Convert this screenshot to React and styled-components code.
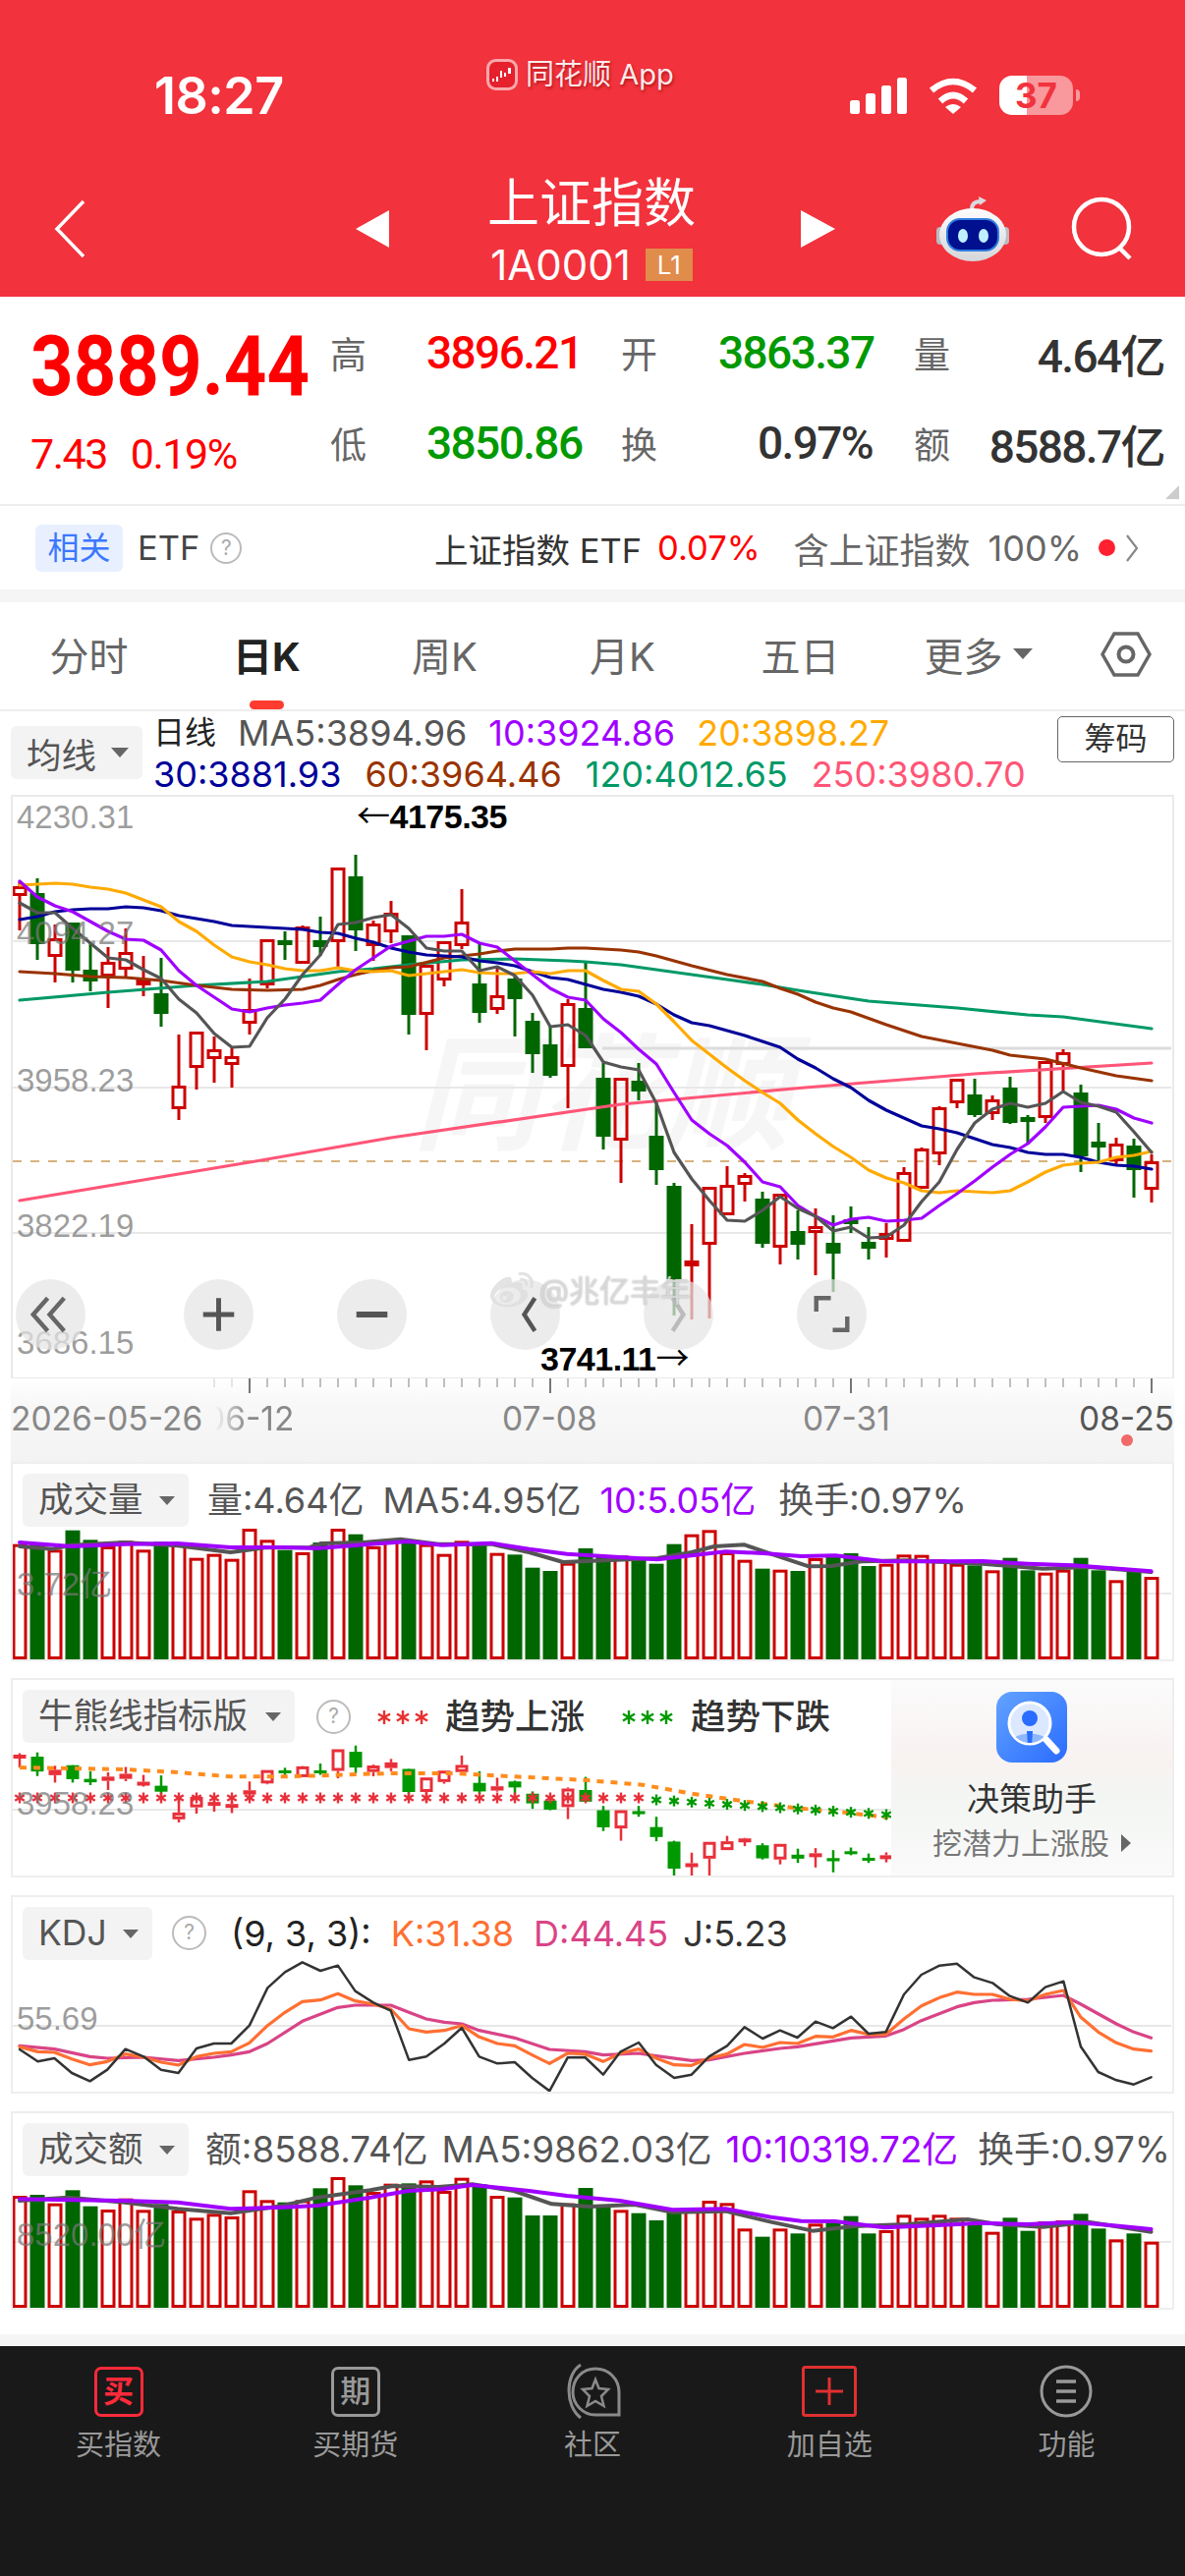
import React from "react";
import styled, { createGlobalStyle } from "styled-components";
import { FaWeibo } from "react-icons/fa";

const SANS = `Inter, "Noto Sans CJK SC", sans-serif`;
const NUM = `Roboto, "Noto Sans CJK SC", sans-serif`;
const LABEL = `"Liberation Sans", "Noto Sans CJK SC", sans-serif`;
const RED = "#ff0000";
const GREEN = "#009900";
const CANDLE_RED = "#cc0000";
const CANDLE_GREEN = "#006600";

// colour, high, body top, body bottom, low (page y, bar pitch 18px)
const CANDLES = [
  ["r", 897, 902, 912, 947], ["g", 894, 909, 961, 977], ["r", 941, 955, 974, 1000], ["g", 939, 939, 988, 1000],
  ["g", 960, 987, 999, 1009], ["r", 964, 979, 994, 1026], ["r", 945, 969, 987, 995], ["r", 973, 997, 1003, 1014],
  ["g", 975, 1011, 1032, 1045], ["r", 1053, 1105, 1129, 1140], ["r", 1050, 1050, 1087, 1109], ["r", 1055, 1068, 1078, 1102],
  ["r", 1065, 1075, 1084, 1107], ["r", 996, 1027, 1042, 1053], ["r", 956, 956, 1003, 1006], ["g", 948, 957, 962, 977],
  ["r", 942, 943, 981, 981], ["g", 933, 957, 964, 973], ["r", 883, 883, 959, 985], ["g", 870, 892, 947, 968],
  ["r", 937, 940, 963, 978], ["r", 917, 929, 949, 960], ["g", 952, 952, 1033, 1053], ["r", 982, 982, 1033, 1069],
  ["r", 958, 958, 998, 1004], ["r", 905, 938, 963, 966], ["g", 960, 1001, 1031, 1041], ["r", 983, 1013, 1028, 1032],
  ["g", 993, 996, 1017, 1055], ["g", 1031, 1039, 1073, 1092], ["g", 1045, 1063, 1095, 1097], ["r", 1017, 1021, 1086, 1128],
  ["g", 980, 1026, 1067, 1067], ["g", 1082, 1097, 1157, 1170], ["r", 1097, 1097, 1161, 1204], ["g", 1082, 1100, 1111, 1120],
  ["g", 1120, 1156, 1191, 1206], ["g", 1204, 1207, 1302, 1339], ["r", 1246, 1283, 1289, 1343], ["r", 1208, 1208, 1267, 1342],
  ["r", 1187, 1206, 1237, 1237], ["r", 1194, 1196, 1206, 1223], ["g", 1213, 1220, 1266, 1270], ["r", 1215, 1215, 1270, 1287],
  ["g", 1232, 1253, 1267, 1282], ["r", 1230, 1248, 1255, 1298], ["g", 1237, 1265, 1276, 1315], ["g", 1228, 1241, 1246, 1255],
  ["g", 1249, 1264, 1271, 1282], ["r", 1245, 1255, 1262, 1280], ["r", 1188, 1193, 1264, 1264], ["r", 1168, 1169, 1210, 1210],
  ["r", 1126, 1127, 1175, 1186], ["r", 1098, 1098, 1123, 1128], ["g", 1098, 1114, 1135, 1137], ["r", 1115, 1119, 1134, 1140],
  ["g", 1096, 1107, 1143, 1144], ["g", 1135, 1137, 1142, 1165], ["r", 1080, 1080, 1138, 1143], ["r", 1068, 1071, 1084, 1110],
  ["g", 1104, 1112, 1177, 1193], ["g", 1143, 1162, 1168, 1183], ["r", 1158, 1164, 1182, 1187], ["g", 1159, 1166, 1191, 1219],
  ["r", 1175, 1182, 1211, 1224],
];

const MA5 = [919,929,929,945,960,975,977,987,996,1017,1031,1052,1066,1065,1036,1017,992,972,941,939,934,931,945,965,968,968,988,984,993,1013,1045,1043,1054,1081,1086,1089,1123,1173,1200,1222,1242,1243,1232,1218,1230,1238,1253,1249,1260,1259,1247,1223,1203,1170,1143,1129,1123,1127,1123,1111,1122,1126,1132,1152,1173];
const MA10 = [897,913,922,928,938,948,956,957,967,988,1003,1015,1027,1030,1026,1023,1021,1018,1002,987,975,963,958,953,953,951,960,964,978,992,1006,1015,1018,1037,1051,1068,1083,1112,1140,1154,1166,1183,1203,1208,1227,1238,1247,1241,1239,1243,1242,1240,1227,1215,1202,1188,1175,1164,1147,1127,1126,1125,1129,1138,1143];
const MA20 = [901,900,899,900,903,905,909,916,923,938,948,962,974,979,982,986,988,988,985,988,989,988,993,991,989,987,990,991,991,989,991,988,988,998,1007,1009,1022,1040,1059,1073,1087,1100,1112,1123,1140,1154,1167,1178,1191,1199,1204,1212,1214,1212,1213,1214,1212,1203,1193,1186,1184,1183,1178,1176,1172];
const MA30 = [936,933,928,926,925,925,923,924,927,932,935,938,942,943,944,945,946,949,950,955,959,965,969,972,973,974,978,980,983,989,995,997,1002,1007,1010,1014,1022,1033,1041,1044,1049,1054,1060,1066,1078,1087,1098,1107,1120,1130,1138,1146,1149,1153,1159,1165,1168,1173,1175,1175,1178,1183,1186,1187,1190];
const MA60 = [[0,989],[2,991],[4,994],[6,995],[8,998],[10,1003],[12,1007],[14,1008],[16,1007],[17,1003],[18,997],[19,992],[20,988],[21,985],[22,984],[24,975],[26,971],[27,968],[28,966],[30,966],[31,965],[32,965],[34,967],[35,969],[36,973],[38,983],[40,992],[42,999],[43,1006],[44,1012],[45,1020],[46,1026],[47,1030],[49,1043],[51,1055],[53,1062],[55,1069],[56,1074],[58,1078],[60,1087],[62,1095],[64,1100]];
const MA120 = [[0,1018],[5,1010],[10,1003],[14,999],[16,994],[18,989],[20,986],[22,982],[25,977],[28,976],[31,978],[32,979],[34,982],[36,987],[38,992],[40,997],[42,1002],[44,1008],[48,1019],[53,1026],[57,1033],[59,1035],[64,1047]];
const MA250 = [[0,1222],[13,1183],[21,1158],[34,1124],[44.4,1107],[54,1093],[64,1082]];

const VOL_TOPS = [215,210,232,173,202,222,205,232,208,212,257,245,260,168,202,233,240,210,168,185,222,205,205,215,245,205,215,242,247,287,297,272,228,250,250,255,275,215,185,172,240,263,290,293,297,258,250,243,282,275,247,248,262,275,280,295,257,295,302,293,257,295,325,300,315];
const VOL_PURPLE = [[26,210],[95,222],[165,215],[235,213],[305,225],[375,225],[420,228],[490,215],[540,207],[585,218],[650,212],[700,230],[750,245],[820,255],[870,262],[915,250],[960,238],[1010,243],[1060,252],[1105,250],[1170,268],[1240,268],[1300,267],[1360,275],[1420,280],[1480,290],[1523,298]];
const VOL_GRAY = [[26,222],[70,230],[95,218],[165,210],[235,220],[305,240],[350,226],[410,225],[425,213],[480,210],[530,200],[580,215],[650,215],[700,240],[745,270],[800,265],[870,258],[915,240],[945,222],[985,217],[1020,245],[1070,283],[1100,282],[1140,268],[1200,265],[1300,275],[1380,290],[1440,285],[1523,300]];
const AMT_TOPS = [945,942,968,928,977,987,953,988,970,990,1012,1000,1008,928,958,965,958,922,888,913,933,908,907,898,930,890,910,945,950,1005,1005,968,921,980,988,998,1020,990,982,960,967,1045,1070,1045,1060,1030,1025,1007,1060,1050,1003,1012,1003,1012,1035,1055,1012,1052,1023,1020,1000,1045,1078,1060,1085];
const AMT_PURPLE = [[26,955],[95,958],[165,960],[235,965],[305,985],[375,980],[420,975],[490,950],[540,930],[585,925],[625,912],[700,930],[750,945],[820,960],[890,988],[960,985],[1020,1010],[1060,1022],[1105,1023],[1170,1042],[1240,1035],[1300,1028],[1360,1032],[1420,1025],[1480,1037],[1523,1047]];
const AMT_GRAY = [[26,960],[90,950],[165,965],[235,985],[305,998],[375,975],[420,950],[490,928],[520,915],[580,918],[625,910],[680,930],[730,970],[780,978],[840,972],[890,995],[960,992],[1020,1025],[1075,1052],[1130,1038],[1200,1032],[1280,1017],[1320,1032],[1380,1040],[1440,1025],[1523,1055]];
const KDJ_J = [[26,498],[50,535],[72,525],[95,570],[119,595],[142,560],[166,497],[190,520],[213,560],[236,570],[260,495],[283,480],[306,480],[330,425],[354,310],[377,262],[400,232],[424,258],[447,242],[470,320],[494,355],[517,380],[541,530],[564,520],[588,480],[611,432],[634,520],[658,541],[681,537],[704,585],[727,625],[751,523],[774,522],[798,575],[821,505],[845,477],[868,545],[892,585],[915,575],[938,520],[962,487],[985,430],[1009,465],[1032,440],[1055,462],[1079,413],[1102,433],[1126,398],[1149,450],[1172,445],[1196,330],[1219,270],[1243,242],[1266,236],[1289,278],[1313,295],[1336,335],[1360,355],[1383,308],[1407,290],[1430,490],[1453,567],[1477,592],[1500,605],[1523,583]];
const KDJ_K = [[26,490],[50,505],[72,507],[95,527],[119,545],[142,535],[166,512],[190,522],[213,537],[236,546],[260,520],[283,510],[306,505],[330,478],[354,425],[377,385],[400,352],[424,347],[447,328],[470,350],[494,360],[517,375],[541,435],[564,445],[588,440],[611,425],[634,460],[658,480],[681,487],[704,515],[727,541],[751,510],[774,512],[798,535],[821,510],[845,497],[868,525],[892,545],[915,547],[938,525],[962,512],[985,483],[1009,492],[1032,477],[1055,480],[1079,458],[1102,460],[1126,440],[1149,452],[1172,452],[1196,405],[1219,365],[1243,340],[1266,323],[1289,330],[1313,330],[1336,345],[1360,350],[1383,330],[1407,318],[1430,400],[1453,445],[1477,478],[1500,497],[1523,503]];
const KDJ_D = [[26,487],[72,497],[119,520],[142,525],[190,522],[236,532],[283,522],[306,515],[330,505],[354,480],[400,412],[447,370],[470,363],[517,363],[541,385],[564,405],[588,415],[611,420],[634,440],[681,463],[727,498],[774,505],[798,515],[845,510],[868,518],[915,532],[938,530],[985,510],[1032,495],[1055,490],[1126,463],[1172,457],[1196,437],[1219,410],[1266,368],[1289,355],[1313,348],[1360,345],[1407,333],[1430,360],[1477,420],[1500,445],[1523,463]];
const TREND = [[26,897],[95,900],[165,903],[235,912],[305,925],[375,925],[420,922],[515,915],[600,915],[680,925],[770,935],[850,950],[910,975],[985,1000],[1050,1020],[1120,1035],[1175,1050]];

const barX = (i) => 20 + 18 * i;
const seriesPoints = (ys) => ys.map((y, i) => `${barX(i)},${y}`).join(" ");
const sparsePoints = (pairs) => pairs.map(([i, y]) => `${barX(i)},${y}`).join(" ");
// traced from the 1.3x / 3x crops of the panels
const tracedPoints = (pairs, base) => pairs.map(([u, v]) => `${u / 1.3},${base + v / 3}`).join(" ");

const GlobalStyle = createGlobalStyle`
  html, body { margin: 0; padding: 0; background: #fff; }
  body { font-family: ${SANS}; }
  * { box-sizing: border-box; }
`;

const Page = styled.div`
  width: 1206px;
  height: 2622px;
  overflow: hidden;
  background: #fff;
  display: flex;
  flex-direction: column;
`;

const Header = styled.header`
  flex: none;
  height: 302px;
  background: #f2323c;
  color: #fff;
`;
const StatusBar = styled.div`
  height: 170px;
  display: grid;
  grid-template-columns: 495px 188px 1fr;
  align-items: start;
`;
const Clock = styled.div`
  margin: 70px 0 0 157px;
  font-size: 52px;
  line-height: 56px;
  font-weight: 600;
  letter-spacing: -0.5px;
`;
const AppTag = styled.div`
  margin-top: 58px;
  height: 36px;
  display: flex;
  align-items: center;
  gap: 8px;
  font-size: 29px;
  line-height: 36px;
  white-space: nowrap;
  color: rgba(255, 255, 255, 0.92);
  text-shadow: 1px 2px 3px rgba(120, 0, 0, 0.55);
  svg {
    flex: none;
  }
`;
const StatusIcons = styled.div`
  margin: 77px 0 0 182px;
  height: 40px;
  display: flex;
  align-items: center;
  gap: 22px;
`;
const Battery = styled.div`
  position: relative;
  width: 75px;
  height: 40px;
  border-radius: 13px;
  overflow: hidden;
  background: linear-gradient(to right, #fff 37%, rgba(255, 255, 255, 0.5) 37%);
  color: #f2323c;
  font-size: 35px;
  font-weight: 700;
  line-height: 40px;
  text-align: center;
`;
const BatteryTip = styled.div`
  width: 4px;
  height: 12px;
  margin-left: -19px;
  border-radius: 0 4px 4px 0;
  background: rgba(255, 255, 255, 0.5);
`;
const NavRow = styled.div`
  height: 132px;
  padding-bottom: 6px;
  display: grid;
  grid-template-columns: 362px 34px 412px 42px 1fr;
  align-items: center;
`;
const BackIcon = styled.svg`
  margin-left: 55px;
  display: block;
`;
const Arrow = styled.div`
  width: 0;
  height: 0;
  border-top: 19px solid transparent;
  border-bottom: 19px solid transparent;
  ${({ $dir }) => ($dir === "left" ? "border-right: 34px solid #fff;" : "border-left: 35px solid #fff; margin-left: 7px;")}
`;
const TitleBlock = styled.div`
  margin-top: 2px;
  display: flex;
  flex-direction: column;
  align-items: center;
`;
const Title = styled.div`
  font-size: 53px;
  line-height: 60px;
`;
const SubTitle = styled.div`
  margin-top: 11px;
  display: flex;
  align-items: center;
  gap: 15px;
  font-size: 42px;
  line-height: 44px;
`;
const LevelBadge = styled.span`
  width: 48px;
  height: 33px;
  background: #e08c4b;
  font-size: 26px;
  line-height: 33px;
  text-align: center;
`;
const NavTools = styled.div`
  margin-left: 103px;
  display: flex;
  align-items: center;
  gap: 63px;
`;

const QuoteSection = styled.section`
  position: relative;
  flex: none;
  height: 213px;
  border-bottom: 2px solid #eee;
  display: flex;
`;
const QuoteLeft = styled.div`
  width: 336px;
  padding: 21px 0 0 31px;
`;
const BigPrice = styled.div`
  font-family: ${NUM};
  font-size: 86px;
  line-height: 100px;
  font-weight: 700;
  color: ${RED};
  transform: scaleX(0.885);
  transform-origin: left center;
  white-space: nowrap;
`;
const ChangeRow = styled.div`
  margin-top: 14px;
  display: flex;
  gap: 24px;
  font-family: ${NUM};
  font-size: 43px;
  line-height: 50px;
  letter-spacing: -1.5px;
  color: ${RED};
`;
const QuoteGrid = styled.div`
  margin-top: 11px;
  display: grid;
  grid-template-columns: 98px 198px 99px 199px 42px 213px;
  grid-auto-rows: 92px;
  align-items: center;
`;
const QuoteLabel = styled.div`
  font-size: 37px;
  color: #666;
  white-space: nowrap;
`;
const QuoteValue = styled.div`
  padding-right: ${({ $pad }) => $pad || 0}px;
  font-family: ${NUM};
  font-size: 46px;
  font-weight: 500;
  letter-spacing: -1.6px;
  white-space: nowrap;
  color: ${({ $color }) => $color};
  text-align: ${({ $right }) => ($right ? "right" : "left")};
`;
const CornerMark = styled.div`
  position: absolute;
  right: 6px;
  bottom: 5px;
  width: 0;
  height: 0;
  border-left: 14px solid transparent;
  border-bottom: 14px solid #ccc;
`;

const EtfRow = styled.section`
  flex: none;
  height: 85px;
  padding: 0 48px 0 36px;
  display: flex;
  align-items: center;
  font-size: 34.5px;
`;
const RelatedChip = styled.span`
  width: 89px;
  height: 48px;
  border-radius: 6px;
  background: #e8f0ff;
  color: #3b78ff;
  font-size: 32px;
  line-height: 48px;
  text-align: center;
`;
const EtfName = styled.span`
  margin-left: 15px;
  color: #444;
`;
const HelpMark = styled.span`
  flex: none;
  width: ${({ $size }) => $size || 32}px;
  height: ${({ $size }) => $size || 32}px;
  margin-left: ${({ $left }) => $left || 0}px;
  border: 2.5px solid #bbb;
  border-radius: 50%;
  color: #aaa;
  font-size: 21px;
  line-height: ${({ $size }) => ($size || 32) - 5}px;
  text-align: center;
`;
const EtfRight = styled.div`
  margin-left: auto;
  display: flex;
  align-items: center;
`;
const EtfText = styled.span`
  margin-left: ${({ $left }) => $left || 0}px;
  font-size: ${({ $size }) => $size || 34.5}px;
  color: ${({ $color }) => $color};
  white-space: nowrap;
`;
const LiveDot = styled.span`
  width: 17px;
  height: 17px;
  margin: 0 11px 0 17px;
  border-radius: 50%;
  background: #ff2030;
`;

const GrayGap = styled.div`
  flex: none;
  height: ${({ $h }) => $h}px;
  background: #f5f5f5;
`;

const Tabs = styled.nav`
  flex: none;
  height: 111px;
  border-bottom: 2px solid #eee;
  display: grid;
  grid-template-columns: repeat(6, 181px) 120px;
  align-items: center;
`;
const Tab = styled.div`
  position: relative;
  height: 100%;
  display: flex;
  align-items: center;
  justify-content: center;
  gap: 10px;
  padding-bottom: 4px;
  font-size: 40px;
  color: ${({ $active }) => ($active ? "#222" : "#666")};
  font-weight: ${({ $active }) => ($active ? 700 : 400)};
  &::after {
    content: "";
    display: ${({ $active }) => ($active ? "block" : "none")};
    position: absolute;
    left: 73px;
    bottom: 0;
    width: 35px;
    height: 9px;
    border-radius: 5px;
    background: #ff3b30;
  }
`;
const Caret = styled.span`
  flex: none;
  width: 0;
  height: 0;
  border-left: ${({ $size }) => $size}px solid transparent;
  border-right: ${({ $size }) => $size}px solid transparent;
  border-top: ${({ $size }) => Math.round($size * 1.1)}px solid ${({ $color }) => $color || "#666"};
`;

const IndicatorBar = styled.div`
  flex: none;
  height: 85px;
  padding: 0 11px;
  display: flex;
`;
const SelectChip = styled.div`
  flex: none;
  height: 54px;
  margin-top: ${({ $top }) => $top}px;
  padding: 0 14px 0 ${({ $pad }) => $pad || 16}px;
  border-radius: 6px;
  background: #f3f3f3;
  display: flex;
  align-items: center;
  justify-content: space-between;
  gap: 12px;
  width: ${({ $w }) => $w}px;
  font-size: 35.5px;
  color: #555;
  white-space: nowrap;
`;
const MaRows = styled.div`
  margin-left: 11px;
  padding-top: 1px;
  flex: 1;
`;
const MaRow = styled.div`
  height: 42px;
  display: flex;
  gap: ${({ $gap }) => $gap}px;
  padding-left: ${({ $indent }) => $indent || 0}px;
  font-size: 36px;
  line-height: 42px;
  white-space: nowrap;
`;
const MaValue = styled.span`
  font-size: ${({ $size }) => $size || 36}px;
  color: ${({ $color }) => $color};
`;
const ChipsButton = styled.div`
  flex: none;
  width: 119px;
  height: 47px;
  margin-top: 5px;
  border: 1.5px solid #666;
  border-radius: 5px;
  font-size: 32px;
  line-height: 44px;
  color: #333;
  text-align: center;
`;

const ChartBox = styled.div`
  position: relative;
  flex: none;
  height: 594px;
  margin: 0 11px;
  border: 2px solid #eaeaea;
  border-bottom-width: 1px;
`;
const ChartSvg = styled.svg`
  display: block;
`;
const ScaleLabel = styled.div`
  position: absolute;
  left: 4px;
  top: ${({ $y }) => $y}px;
  font-family: ${LABEL};
  font-size: ${({ $size }) => $size || 33}px;
  line-height: 36px;
  color: rgba(120, 120, 120, 0.72);
  white-space: nowrap;
`;
const ExtremeLabel = styled.div`
  position: absolute;
  left: ${({ $x }) => $x}px;
  top: ${({ $y }) => $y}px;
  font-family: ${LABEL};
  font-size: 34px;
  font-weight: 700;
  line-height: 36px;
  letter-spacing: -0.5px;
  color: #000;
  white-space: nowrap;
`;
const ExtremeArrow = styled.span`
  font-family: "Noto Sans CJK SC", sans-serif;
  font-weight: 400;
`;
const ChartControls = styled.div`
  position: absolute;
  left: 3px;
  top: 491px;
  display: flex;
  gap: 85px;
`;
const ControlButton = styled.div`
  width: 71px;
  height: 72px;
  margin-right: ${({ $extra }) => $extra || 0}px;
  border-radius: 50%;
  background: rgba(228, 228, 228, 0.72);
  display: flex;
  align-items: center;
  justify-content: center;
`;
const Watermark = styled.div`
  position: absolute;
  left: 486px;
  top: 478px;
  display: flex;
  align-items: center;
  gap: 6px;
  color: rgba(222, 222, 222, 0.85);
  font-size: 31px;
  line-height: 50px;
  text-shadow: 0 0 2px rgba(120, 120, 120, 0.6);
  white-space: nowrap;
`;

const TimeAxis = styled.div`
  position: relative;
  flex: none;
  height: 85px;
  margin: 0 11px;
  background: linear-gradient(#fff 0, #f8f8f8 30%, #f3f3f3 100%);
`;
const AxisDate = styled.div`
  position: absolute;
  left: ${({ $x }) => $x}px;
  top: 23px;
  font-size: 33.5px;
  line-height: 36px;
  color: ${({ $dark }) => ($dark ? "#555" : "#888")};
  white-space: nowrap;
  ${({ $fade }) => $fade && "-webkit-mask-image: linear-gradient(to right, transparent 12%, #000 48%); mask-image: linear-gradient(to right, transparent 12%, #000 48%);"}
`;
const AxisDot = styled.div`
  position: absolute;
  left: 1130px;
  top: 57px;
  width: 12px;
  height: 12px;
  border-radius: 50%;
  background: #f06a6a;
`;

const Panel = styled.section`
  position: relative;
  flex: none;
  height: ${({ $h }) => $h}px;
  margin: ${({ $gap }) => $gap || 0}px 11px 0;
  border: 2px solid #eee;
  overflow: hidden;
  display: ${({ $row }) => ($row ? "flex" : "block")};
`;
const PanelMain = styled.div`
  position: relative;
  width: 894px;
`;
const PanelHead = styled.div`
  height: ${({ $h }) => $h || 63}px;
  padding: 10px 0 0 10px;
  display: flex;
  gap: ${({ $gap }) => $gap || 18}px;
  font-size: ${({ $size }) => $size || 36}px;
  line-height: 54px;
  white-space: nowrap;
`;
const HeadValue = styled.span`
  margin-left: ${({ $left }) => $left || 0}px;
  color: ${({ $color }) => $color || "#555"};
`;
const HeadCluster = styled.div`
  display: flex;
  align-items: center;
`;
const LegendSpace = styled.span`
  width: ${({ $w }) => $w}px;
`;
const LegendText = styled.span`
  margin-left: ${({ $left }) => $left || 0}px;
  font-size: 35.5px;
  font-weight: 500;
  color: #333;
`;
const Aside = styled.aside`
  flex: 1;
  background: linear-gradient(#fbfbfb 0, #f8f2f1 40%, #f3f6f3 62%, #fafafa 100%);
  display: flex;
  flex-direction: column;
  align-items: center;
  padding-top: 12px;
`;
const AsideTitle = styled.div`
  margin-top: 15px;
  font-size: 33px;
  line-height: 44px;
  color: #333;
`;
const AsideSub = styled.div`
  margin-top: 2px;
  display: flex;
  align-items: center;
  gap: 12px;
  font-size: 30px;
  line-height: 42px;
  color: #777;
`;
const SideCaret = styled.span`
  width: 0;
  height: 0;
  border-top: 9px solid transparent;
  border-bottom: 9px solid transparent;
  border-left: 10px solid #666;
`;

const BottomNav = styled.nav`
  flex: 1;
  background: #191919;
  display: grid;
  grid-template-columns: repeat(5, 1fr);
  align-items: start;
  padding-top: 17px;
`;
const NavItem = styled.div`
  display: flex;
  flex-direction: column;
  align-items: center;
  font-size: 29px;
  line-height: 40px;
  color: #999;
`;
const NavIconBox = styled.div`
  height: 58px;
  margin-bottom: 6px;
  display: flex;
  align-items: center;
  justify-content: center;
`;
const LetterBox = styled.div`
  width: 50px;
  height: 51px;
  border: 3px solid ${({ $color }) => $color};
  border-radius: 7px;
  color: ${({ $color }) => $color};
  font-size: 31px;
  font-weight: ${({ $bold }) => ($bold ? 700 : 500)};
  line-height: 43px;
  text-align: center;
`;
const Spacer = styled.div`
  flex: none;
  height: ${({ $h }) => $h}px;
`;
const TickStrip = styled.svg`
  display: block;
`;

const Candle = ({ i, c, hi, top, bot, lo, red, green, width = 12, wick = 3 }) => {
  const x = barX(i);
  if (c === "g") {
    return (
      <g>
        <line x1={x} x2={x} y1={hi} y2={lo} stroke={green} strokeWidth={wick} />
        <rect x={x - width / 2 - 1.5} y={top} width={width + 3} height={Math.max(bot - top, 3)} fill={green} />
      </g>
    );
  }
  return (
    <g>
      {hi < top && <line x1={x} x2={x} y1={hi} y2={top} stroke={red} strokeWidth={wick} />}
      {lo > bot && <line x1={x} x2={x} y1={bot} y2={lo} stroke={red} strokeWidth={wick} />}
      <rect x={x - width / 2} y={top + 1.5} width={width} height={Math.max(bot - top - 3, 1)} fill="none" stroke={red} strokeWidth={3} />
    </g>
  );
};

const Line = ({ points, color, width = 3.2 }) => (
  <polyline points={points} fill="none" stroke={color} strokeWidth={width} strokeLinejoin="round" strokeLinecap="round" />
);

const GridLine = ({ y, from = 13, to = 1192 }) => <line x1={from} x2={to} y1={y} y2={y} stroke="#e8e8e8" strokeWidth="2" />;

const Asterisk = ({ x, y, color, r = 5.5 }) => (
  <g stroke={color} strokeWidth="2.4">
    <line x1={x} x2={x} y1={y - r} y2={y + r} />
    <line x1={x - r * 0.87} x2={x + r * 0.87} y1={y - r * 0.5} y2={y + r * 0.5} />
    <line x1={x - r * 0.87} x2={x + r * 0.87} y1={y + r * 0.5} y2={y - r * 0.5} />
  </g>
);

const VolumeBars = ({ tops, base, bottom }) =>
  tops.map((v, i) => {
    const y = base + v / 3;
    const x = barX(i);
    return CANDLES[i][0] === "g" ? (
      <rect key={i} x={x - 7.5} y={y} width={15} height={bottom - y} fill={CANDLE_GREEN} />
    ) : (
      <rect key={i} x={x - 6} y={y + 1.5} width={12} height={bottom - y - 3} fill="none" stroke={CANDLE_RED} strokeWidth={3} />
    );
  });

const Robot = () => (
  <svg width="74" height="68" viewBox="0 0 74 68">
    <defs>
      <linearGradient id="robotShell" x1="0" y1="0" x2="0" y2="1">
        <stop offset="0" stopColor="#fdfdfd" />
        <stop offset="1" stopColor="#d4d6da" />
      </linearGradient>
    </defs>
    <path d="M36 14 C36 8 40 6 45 6" fill="none" stroke="#d8dade" strokeWidth="4" />
    <path d="M43 1 L51 5 L44 10 Z" fill="#d8dade" />
    <rect x="0" y="32" width="8" height="18" rx="4" fill="#b9bcc2" />
    <rect x="66" y="32" width="8" height="18" rx="4" fill="#b9bcc2" />
    <ellipse cx="37" cy="40" rx="34" ry="27" fill="url(#robotShell)" />
    <rect x="11" y="24" width="52" height="32" rx="13" fill="#00108f" stroke="#2f7de0" strokeWidth="2" />
    <ellipse cx="27" cy="41" rx="5" ry="7" fill="#bfefff" />
    <ellipse cx="48" cy="41" rx="5" ry="7" fill="#bfefff" />
  </svg>
);

const WifiIcon = () => (
  <svg width="50" height="37" viewBox="0 0 50 37">
    <path d="M3 13 Q25 -5 47 13" fill="none" stroke="#fff" strokeWidth="6.5" />
    <path d="M12 24 Q25 12 38 24" fill="none" stroke="#fff" strokeWidth="6.5" />
    <path d="M17 30 Q25 24 33 30 L25 37 Z" fill="#fff" />
  </svg>
);

const SignalIcon = () => (
  <svg width="58" height="37" viewBox="0 0 58 37" fill="#fff">
    <rect x="0" y="23" width="10" height="14" rx="2.5" />
    <rect x="16" y="16" width="10" height="21" rx="2.5" />
    <rect x="32" y="8" width="10" height="29" rx="2.5" />
    <rect x="48" y="0" width="10" height="37" rx="2.5" />
  </svg>
);

const AppLogo = () => (
  <svg width="32" height="32" viewBox="0 0 32 32">
    <rect x="1.5" y="1.5" width="29" height="29" rx="8" fill="#e6202c" stroke="#f9a8ac" strokeWidth="3" />
    <path d="M6 20h2v3H6zM10 18h2v5h-2zM14 12h2v7h-2zM18 14h2v4h-2zM22 9h3v6h-3z" fill="#fff" />
  </svg>
);

const AdIcon = () => (
  <svg width="72" height="72" viewBox="0 0 72 72">
    <defs>
      <linearGradient id="adBg" x1="0" y1="0" x2="1" y2="1">
        <stop offset="0" stopColor="#63a3ff" />
        <stop offset="1" stopColor="#2a6cff" />
      </linearGradient>
      <clipPath id="adLens"><circle cx="34" cy="32" r="20" /></clipPath>
    </defs>
    <rect width="72" height="72" rx="16" fill="url(#adBg)" />
    <circle cx="34" cy="32" r="21" fill="#dbe8ff" stroke="#fff" strokeWidth="3" />
    <g clipPath="url(#adLens)">
      <path d="M12 56 C14 38 54 38 56 56 Z" fill="#8db8fb" />
      <path d="M31 40h6l-1 14h-4z" fill="#2a6cff" />
    </g>
    <circle cx="34" cy="27" r="8" fill="#2a6cff" />
    <path d="M51 49 L61 60" stroke="#fff" strokeWidth="7" strokeLinecap="round" />
  </svg>
);

const CONTROL_ICONS = {
  rewind: <path d="M33 19 L18 36 L33 53 M50 19 L35 36 L50 53" fill="none" stroke="#666" strokeWidth="4.5" />,
  plus: <path d="M36 19 V53 M20 36 H52" stroke="#555" strokeWidth="5" />,
  minus: <path d="M20 36 H52" stroke="#555" strokeWidth="6" />,
  prev: <path d="M46 19 L35 36 L46 53" fill="none" stroke="#555" strokeWidth="4.5" />,
  next: <path d="M30 19 L41 36 L30 53" fill="none" stroke="#bbb" strokeWidth="4.5" />,
  expand: <path d="M20 33 V19 H35 M37 52 H52 V38" fill="none" stroke="#666" strokeWidth="4.5" />,
};

const ControlIcon = ({ name }) => (
  <svg width="71" height="72" viewBox="0 0 72 72">
    {CONTROL_ICONS[name]}
  </svg>
);

const StarAsterisks = ({ color }) => (
  <svg width="52" height="20" viewBox="0 0 52 20">
    <Asterisk x={7} y={10} color={color} r={7} />
    <Asterisk x={26} y={10} color={color} r={7} />
    <Asterisk x={45} y={10} color={color} r={7} />
  </svg>
);

const App = () => {
  const scaleDown = (y) => 1786 + (y - 902) * 0.29;
  const asterisks = Array.from({ length: 50 }, (_, i) => i);

  return (
    <Page>
      <GlobalStyle />
      <Header>
        <StatusBar>
          <Clock>18:27</Clock>
          <AppTag>
            <AppLogo />
            同花顺 App
          </AppTag>
          <StatusIcons>
            <SignalIcon />
            <WifiIcon />
            <Battery>37</Battery>
            <BatteryTip />
          </StatusIcons>
        </StatusBar>
        <NavRow>
          <BackIcon width="32" height="60" viewBox="0 0 32 60">
            <path d="M30 2 L3 30 L30 58" fill="none" stroke="#fff" strokeWidth="3.5" />
          </BackIcon>
          <Arrow $dir="left" />
          <TitleBlock>
            <Title>上证指数</Title>
            <SubTitle>
              1A0001
              <LevelBadge>L1</LevelBadge>
            </SubTitle>
          </TitleBlock>
          <Arrow $dir="right" />
          <NavTools>
            <Robot />
            <svg width="65" height="66" viewBox="0 0 65 66">
              <circle cx="31" cy="31" r="28" fill="none" stroke="#fff" strokeWidth="4.5" />
              <path d="M49 52 L60 63" stroke="#fff" strokeWidth="4.5" />
            </svg>
          </NavTools>
        </NavRow>
      </Header>

      <QuoteSection>
        <QuoteLeft>
          <BigPrice>3889.44</BigPrice>
          <ChangeRow>
            <span>7.43</span>
            <span>0.19%</span>
          </ChangeRow>
        </QuoteLeft>
        <QuoteGrid>
          <QuoteLabel>高</QuoteLabel>
          <QuoteValue $color={RED}>3896.21</QuoteValue>
          <QuoteLabel>开</QuoteLabel>
          <QuoteValue $color={GREEN} $right $pad={42}>3863.37</QuoteValue>
          <QuoteLabel>量</QuoteLabel>
          <QuoteValue $color="#333" $right>4.64亿</QuoteValue>
          <QuoteLabel>低</QuoteLabel>
          <QuoteValue $color={GREEN}>3850.86</QuoteValue>
          <QuoteLabel>换</QuoteLabel>
          <QuoteValue $color="#333" $right $pad={42}>0.97%</QuoteValue>
          <QuoteLabel>额</QuoteLabel>
          <QuoteValue $color="#333" $right>8588.7亿</QuoteValue>
        </QuoteGrid>
        <CornerMark />
      </QuoteSection>

      <EtfRow>
        <RelatedChip>相关</RelatedChip>
        <EtfName>ETF</EtfName>
        <HelpMark $left={11}>?</HelpMark>
        <EtfRight>
          <EtfText $color="#333">上证指数 ETF</EtfText>
          <EtfText $color={RED} $left={16}>0.07%</EtfText>
          <EtfText $color="#666" $left={34} $size={36}>含上证指数</EtfText>
          <EtfText $color="#666" $left={18} $size={36}>100%</EtfText>
          <LiveDot />
          <svg width="12" height="28" viewBox="0 0 12 28">
            <path d="M1 1 L11 14 L1 27" fill="none" stroke="#888" strokeWidth="2.2" />
          </svg>
        </EtfRight>
      </EtfRow>
      <GrayGap $h={13} />

      <Tabs>
        <Tab>分时</Tab>
        <Tab $active>日K</Tab>
        <Tab>周K</Tab>
        <Tab>月K</Tab>
        <Tab>五日</Tab>
        <Tab>
          更多
          <Caret $size={10} />
        </Tab>
        <Tab>
          <svg width="52" height="46" viewBox="0 0 52 46">
            <path d="M2 23 L14 2 H38 L50 23 L38 44 H14 Z" fill="none" stroke="#666" strokeWidth="3.5" />
            <circle cx="26" cy="23" r="7.5" fill="none" stroke="#666" strokeWidth="4" />
          </svg>
        </Tab>
      </Tabs>

      <IndicatorBar>
        <SelectChip $w={134} $top={15}>
          均线
          <Caret $size={9} />
        </SelectChip>
        <MaRows>
          <MaRow $gap={22}>
            <MaValue $color="#222" $size={32}>日线</MaValue>
            <MaValue $color="#555">MA5:3894.96</MaValue>
            <MaValue $color="#a000ff">10:3924.86</MaValue>
            <MaValue $color="#ffaa00">20:3898.27</MaValue>
          </MaRow>
          <MaRow $gap={24}>
            <MaValue $color="#000099">30:3881.93</MaValue>
            <MaValue $color="#993300">60:3964.46</MaValue>
            <MaValue $color="#009966">120:4012.65</MaValue>
            <MaValue $color="#ff5577">250:3980.70</MaValue>
          </MaRow>
        </MaRows>
        <ChipsButton>筹码</ChipsButton>
      </IndicatorBar>

      <ChartBox>
        <ChartSvg width="1180" height="591" viewBox="13 811 1180 591">
          <text x="420" y="1160" fontFamily={SANS} fontSize="128" fontWeight="700" fontStyle="italic" fill="#f6f6f6">同花顺</text>
          <GridLine y={958} />
          <GridLine y={1107} />
          <GridLine y={1255} />
          <line x1="613" x2="1192" y1="1067" y2="1067" stroke="#dcdcdc" strokeWidth="3" />
          <line x1="13" x2="1192" y1="1182" y2="1182" stroke="#d8b27c" strokeWidth="2" strokeDasharray="9 9" />
          {CANDLES.map(([c, hi, top, bot, lo], i) => (
            <Candle key={i} i={i} c={c} hi={hi} top={top} bot={bot} lo={lo} red={CANDLE_RED} green={CANDLE_GREEN} />
          ))}
          <Line points={sparsePoints(MA250)} color="#ff5577" />
          <Line points={sparsePoints(MA120)} color="#009966" />
          <Line points={sparsePoints(MA60)} color="#993300" />
          <Line points={seriesPoints(MA30)} color="#000099" />
          <Line points={seriesPoints(MA20)} color="#ffaa00" />
          <Line points={seriesPoints(MA10)} color="#a000ff" />
          <Line points={seriesPoints(MA5)} color="#555555" />
        </ChartSvg>
        <ScaleLabel $y={3}>4230.31</ScaleLabel>
        <ScaleLabel $y={121}>4094.27</ScaleLabel>
        <ScaleLabel $y={271}>3958.23</ScaleLabel>
        <ScaleLabel $y={419}>3822.19</ScaleLabel>
        <ScaleLabel $y={538}>3686.15</ScaleLabel>
        <ExtremeLabel $x={350} $y={0}><ExtremeArrow>←</ExtremeArrow>4175.35</ExtremeLabel>
        <ExtremeLabel $x={537} $y={552}>3741.11<ExtremeArrow>→</ExtremeArrow></ExtremeLabel>
        <ChartControls>
          <ControlButton $extra={15}><ControlIcon name="rewind" /></ControlButton>
          <ControlButton><ControlIcon name="plus" /></ControlButton>
          <ControlButton><ControlIcon name="minus" /></ControlButton>
          <ControlButton><ControlIcon name="prev" /></ControlButton>
          <ControlButton><ControlIcon name="next" /></ControlButton>
          <ControlButton><ControlIcon name="expand" /></ControlButton>
        </ChartControls>
        <Watermark>
          <FaWeibo size={44} />
          @兆亿丰年
        </Watermark>
      </ChartBox>

      <TimeAxis>
        <TickStrip width="1184" height="18" viewBox="11 1403 1184 18">
          {Array.from({ length: 54 }, (_, k) => k + 11).map((k) => {
            const major = (k - 13) % 17 === 0;
            return (
              <line
                key={k}
                x1={barX(k)}
                x2={barX(k)}
                y1="1403"
                y2={major ? 1418 : 1412}
                stroke={major ? "#777" : k < 13 ? "#ddd" : "#aaa"}
                strokeWidth={major ? 2 : 1.5}
              />
            );
          })}
        </TickStrip>
        <AxisDate $x={0}>2026-05-26</AxisDate>
        <AxisDate $x={197} $fade>06-12</AxisDate>
        <AxisDate $x={500}>07-08</AxisDate>
        <AxisDate $x={806}>07-31</AxisDate>
        <AxisDate $x={1087} $dark>08-25</AxisDate>
        <AxisDot />
      </TimeAxis>

      <Panel $h={203}>
        <PanelHead $gap={19}>
          <SelectChip $w={169} $top={0} $pad={16}>
            成交量
            <Caret $size={8} />
          </SelectChip>
          <HeadValue>量:4.64亿</HeadValue>
          <HeadValue>MA5:4.95亿</HeadValue>
          <HeadValue $color="#a000ff">10:5.05亿</HeadValue>
          <HeadValue $left={4}>换手:0.97%</HeadValue>
        </PanelHead>
        <ChartSvg width="1180" height="136" viewBox="13 1553 1180 136">
          <GridLine y={1622} />
          <VolumeBars tops={VOL_TOPS} base={1500} bottom={1689} />
          <Line points={tracedPoints(VOL_GRAY, 1500)} color="#555555" width={4} />
          <Line points={tracedPoints(VOL_PURPLE, 1500)} color="#a000ff" width={4} />
        </ChartSvg>
        <ScaleLabel $y={105}>3.72亿</ScaleLabel>
      </Panel>

      <Panel $h={203} $gap={17} $row>
        <PanelMain>
          <PanelHead $h={65}>
            <SelectChip $w={277} $top={0}>
              牛熊线指标版
              <Caret $size={8} />
            </SelectChip>
            <HeadCluster>
              <HelpMark $size={35} $left={4}>?</HelpMark>
              <LegendSpace $w={27} />
              <StarAsterisks color="#e83030" />
              <LegendText $left={17}>趋势上涨</LegendText>
              <LegendSpace $w={38} />
              <StarAsterisks color="#009900" />
              <LegendText $left={18}>趋势下跌</LegendText>
            </HeadCluster>
          </PanelHead>
          <ChartSvg width="894" height="134" viewBox="13 1775 894 134">
            <GridLine y={1842} to={907} />
            {CANDLES.slice(0, 50).map(([c, hi, top, bot, lo], i) => (
              <Candle
                key={i}
                i={i}
                c={c}
                hi={scaleDown(hi)}
                top={scaleDown(top)}
                bot={scaleDown(bot)}
                lo={scaleDown(lo)}
                red="#e8303a"
                green="#009900"
                width={10}
                wick={2.5}
              />
            ))}
            <polyline points={tracedPoints(TREND, 1500)} fill="none" stroke="#ff8c1e" strokeWidth="4" strokeDasharray="7 7" />
            {asterisks.map((i) =>
              i < 36 ? (
                <Asterisk key={i} x={barX(i)} y={1830} color="#e8303a" />
              ) : (
                <Asterisk key={i} x={barX(i)} y={1832 + (i - 36) * 1.15} color="#009900" />
              )
            )}
          </ChartSvg>
          <ScaleLabel $y={108}>3958.23</ScaleLabel>
        </PanelMain>
        <Aside>
          <AdIcon />
          <AsideTitle>决策助手</AsideTitle>
          <AsideSub>
            挖潜力上涨股
            <SideCaret />
          </AsideSub>
        </Aside>
      </Panel>

      <Panel $h={202} $gap={18}>
        <PanelHead $gap={20}>
          <SelectChip $w={132} $top={0} $pad={16}>
            KDJ
            <Caret $size={8} />
          </SelectChip>
          <HeadCluster>
            <HelpMark $size={35}>?</HelpMark>
          </HeadCluster>
          <HeadValue $color="#222" $left={5}>(9, 3, 3):</HeadValue>
          <HeadValue $color="#ff6f32">K:31.38</HeadValue>
          <HeadValue $color="#d94486">D:44.45</HeadValue>
          <HeadValue $color="#333" $left={-5}>J:5.23</HeadValue>
        </PanelHead>
        <ChartSvg width="1180" height="135" viewBox="13 1994 1180 135">
          <GridLine y={2062} />
          <Line points={tracedPoints(KDJ_D, 1920)} color="#d94486" />
          <Line points={tracedPoints(KDJ_K, 1920)} color="#ff6f32" />
          <Line points={tracedPoints(KDJ_J, 1920)} color="#333333" width={2.5} />
        </ChartSvg>
        <ScaleLabel $y={106}>55.69</ScaleLabel>
      </Panel>

      <Panel $h={202} $gap={18}>
        <PanelHead $gap={14} $size={36.8}>
          <SelectChip $w={169} $top={0}>
            成交额
            <Caret $size={8} />
          </SelectChip>
          <HeadValue $left={3}>额:8588.74亿</HeadValue>
          <HeadValue>MA5:9862.03亿</HeadValue>
          <HeadValue $color="#a000ff">10:10319.72亿</HeadValue>
          <HeadValue $left={6}>换手:0.97%</HeadValue>
        </PanelHead>
        <ChartSvg width="1180" height="135" viewBox="13 2214 1180 135">
          <GridLine y={2282} />
          <VolumeBars tops={AMT_TOPS} base={1920} bottom={2349} />
          <Line points={tracedPoints(AMT_GRAY, 1920)} color="#555555" width={4} />
          <Line points={tracedPoints(AMT_PURPLE, 1920)} color="#a000ff" width={4} />
        </ChartSvg>
        <ScaleLabel $y={106}>8520.00亿</ScaleLabel>
      </Panel>

      <Spacer $h={25} />
      <GrayGap $h={12} />

      <BottomNav>
        <NavItem>
          <NavIconBox><LetterBox $color="#ff2a3a" $bold>买</LetterBox></NavIconBox>
          买指数
        </NavItem>
        <NavItem>
          <NavIconBox><LetterBox $color="#999">期</LetterBox></NavIconBox>
          买期货
        </NavItem>
        <NavItem>
          <NavIconBox>
            <svg width="60" height="58" viewBox="0 0 60 58" fill="none" stroke="#8a8a8a" strokeWidth="3">
              <path d="M18 2 C2 12 2 44 18 56" />
              <path d="M33 6 C46 6 57 16 57 30 V53 H33 C20 53 10 42 10 30 C10 16 20 6 33 6 Z" />
              <path d="M33 17 L36.5 26 L46 27 L39 34 L41.5 44 L33 39 L24.5 44 L27 34 L20 27 L29.5 26 Z" strokeWidth="2.5" />
            </svg>
          </NavIconBox>
          社区
        </NavItem>
        <NavItem>
          <NavIconBox>
            <svg width="56" height="52" viewBox="0 0 56 52" fill="none" stroke="#e03030" strokeWidth="3">
              <rect x="1.5" y="1.5" width="53" height="49" rx="2" />
              <path d="M28 12 V40 M14 26 H42" />
            </svg>
          </NavIconBox>
          加自选
        </NavItem>
        <NavItem>
          <NavIconBox>
            <svg width="54" height="54" viewBox="0 0 54 54" fill="none" stroke="#999">
              <circle cx="27" cy="27" r="25" strokeWidth="3" />
              <path d="M17 17 H37 M17 27 H37 M17 37 H37" strokeWidth="3.5" />
            </svg>
          </NavIconBox>
          功能
        </NavItem>
      </BottomNav>
    </Page>
  );
};

export default App;
